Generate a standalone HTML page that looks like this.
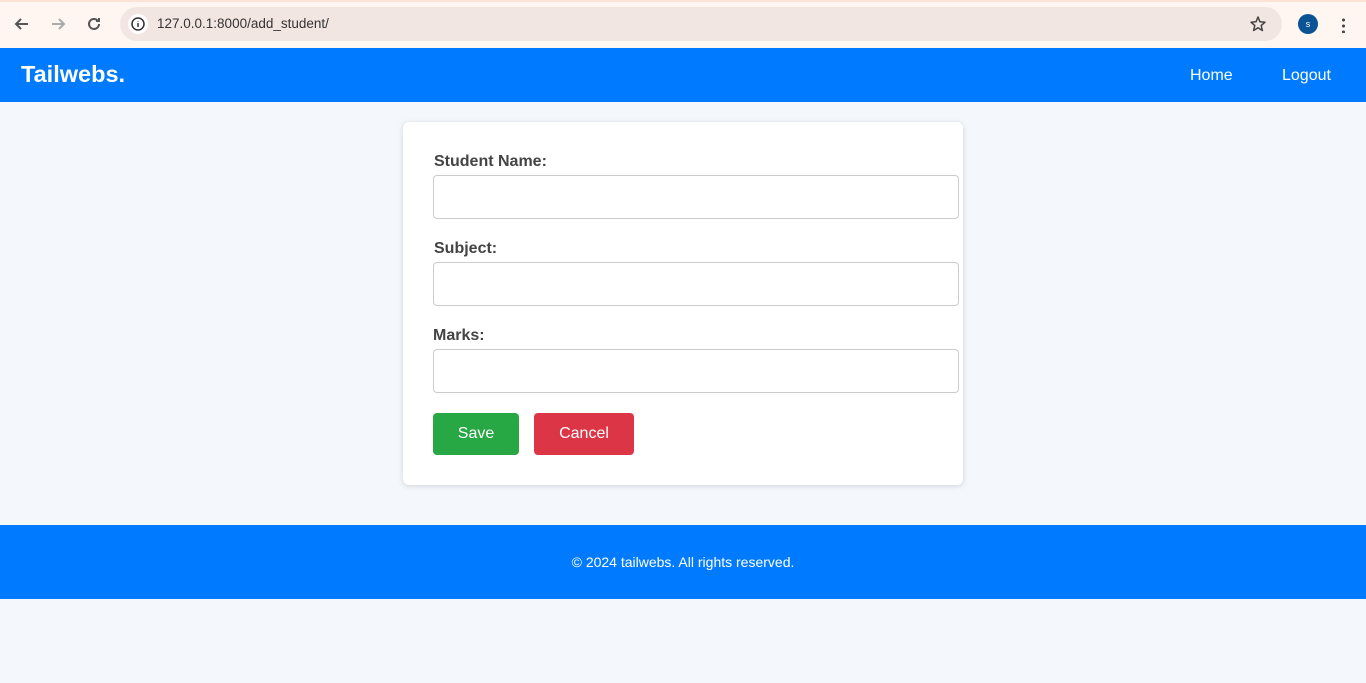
<!DOCTYPE html>
<html><head><meta charset="utf-8"><style>
*{box-sizing:border-box;margin:0;padding:0}
body{width:1366px;height:683px;overflow:hidden;background:#f4f7fb;font-family:"Liberation Sans",Arial,sans-serif;position:relative}
.chrome{position:absolute;left:0;top:0;width:1366px;height:48px;background:#fff6f2;border-top:2px solid #fde3d6}
.omni{position:absolute;left:120px;top:5px;width:1162px;height:34px;border-radius:17px;background:#f2e6e3}
.url{position:absolute;left:157px;top:14px;font-size:13.5px;color:#333}
.nav{position:absolute;top:48px;left:0;width:1366px;height:54px;background:#007bff}
.brand{position:absolute;left:21px;top:13px;color:#fff;font-weight:bold;font-size:23.5px}
.nl{position:absolute;top:19px;color:#fff;font-size:16px}
.card{position:absolute;left:403px;top:122px;width:560px;height:363px;background:#fff;border-radius:6px;box-shadow:0 1px 6px rgba(0,0,0,.15)}
label{position:absolute;left:31px;font-weight:bold;font-size:16px;color:#444}
.inp{position:absolute;left:30px;width:526px;height:44px;border:1px solid #ccc;border-radius:4px}
.btn{position:absolute;top:291px;height:42px;border-radius:4px;color:#fff;font-size:16px;text-align:center;line-height:42px}
.foot{position:absolute;top:525px;left:0;width:1366px;height:74px;background:#007bff;color:#fff;font-size:14px;text-align:center;line-height:74px}
</style></head><body>
<div class="chrome">
<svg style="position:absolute;left:12px;top:12px" width="20" height="20" viewBox="0 0 20 20"><path d="M16 10H4M9 5L4 10l5 5" stroke="#555" stroke-width="2" fill="none"/></svg>
<svg style="position:absolute;left:48px;top:12px" width="20" height="20" viewBox="0 0 20 20"><path d="M4 10h12M11 5l5 5-5 5" stroke="#aaa" stroke-width="2" fill="none"/></svg>
<svg style="position:absolute;left:84px;top:12px" width="20" height="20" viewBox="0 0 20 20"><path d="M15 10a5 5 0 1 1-1.5-3.6M15 4v3h-3" stroke="#555" stroke-width="2" fill="none"/></svg>
<div class="omni"></div>
<svg style="position:absolute;left:128px;top:12px" width="20" height="20" viewBox="0 0 20 20"><circle cx="10" cy="10" r="10" fill="#fff"/><circle cx="10" cy="10" r="6" stroke="#333" stroke-width="1.5" fill="none"/><path d="M10 9v4M10 7v.5" stroke="#333" stroke-width="1.5"/></svg>
<div class="url">127.0.0.1:8000/add_student/</div>
<svg style="position:absolute;left:1249px;top:13px" width="18" height="18" viewBox="0 0 18 18"><path d="M9 2l2 4.8 5 .4-3.8 3.3 1.2 5L9 12.8 4.6 15.5l1.2-5L2 7.2l5-.4z" stroke="#444" stroke-width="1.5" fill="none" stroke-linejoin="round"/></svg>
<div style="position:absolute;left:1298px;top:12px;width:20px;height:20px;border-radius:50%;background:#0b5394;color:#fff;font-size:9px;text-align:center;line-height:20px">s</div>
<div style="position:absolute;left:1342px;top:15px;width:3px;height:16px;background:radial-gradient(circle,#444 1.4px,transparent 1.6px) 0 0/3px 6px"></div>
</div>
<div class="nav"><div class="brand">Tailwebs.</div><div class="nl" style="left:1190px">Home</div><div class="nl" style="left:1282px">Logout</div></div>
<div class="card">
<label style="top:31px">Student Name:</label><div class="inp" style="top:53px"></div>
<label style="top:118px">Subject:</label><div class="inp" style="top:140px"></div>
<label style="top:205px;left:30px">Marks:</label><div class="inp" style="top:227px"></div>
<div class="btn" style="left:30px;width:86px;background:#28a745">Save</div>
<div class="btn" style="left:131px;width:100px;background:#dc3545">Cancel</div>
</div>
<div class="foot">© 2024 tailwebs. All rights reserved.</div>
</body></html>
